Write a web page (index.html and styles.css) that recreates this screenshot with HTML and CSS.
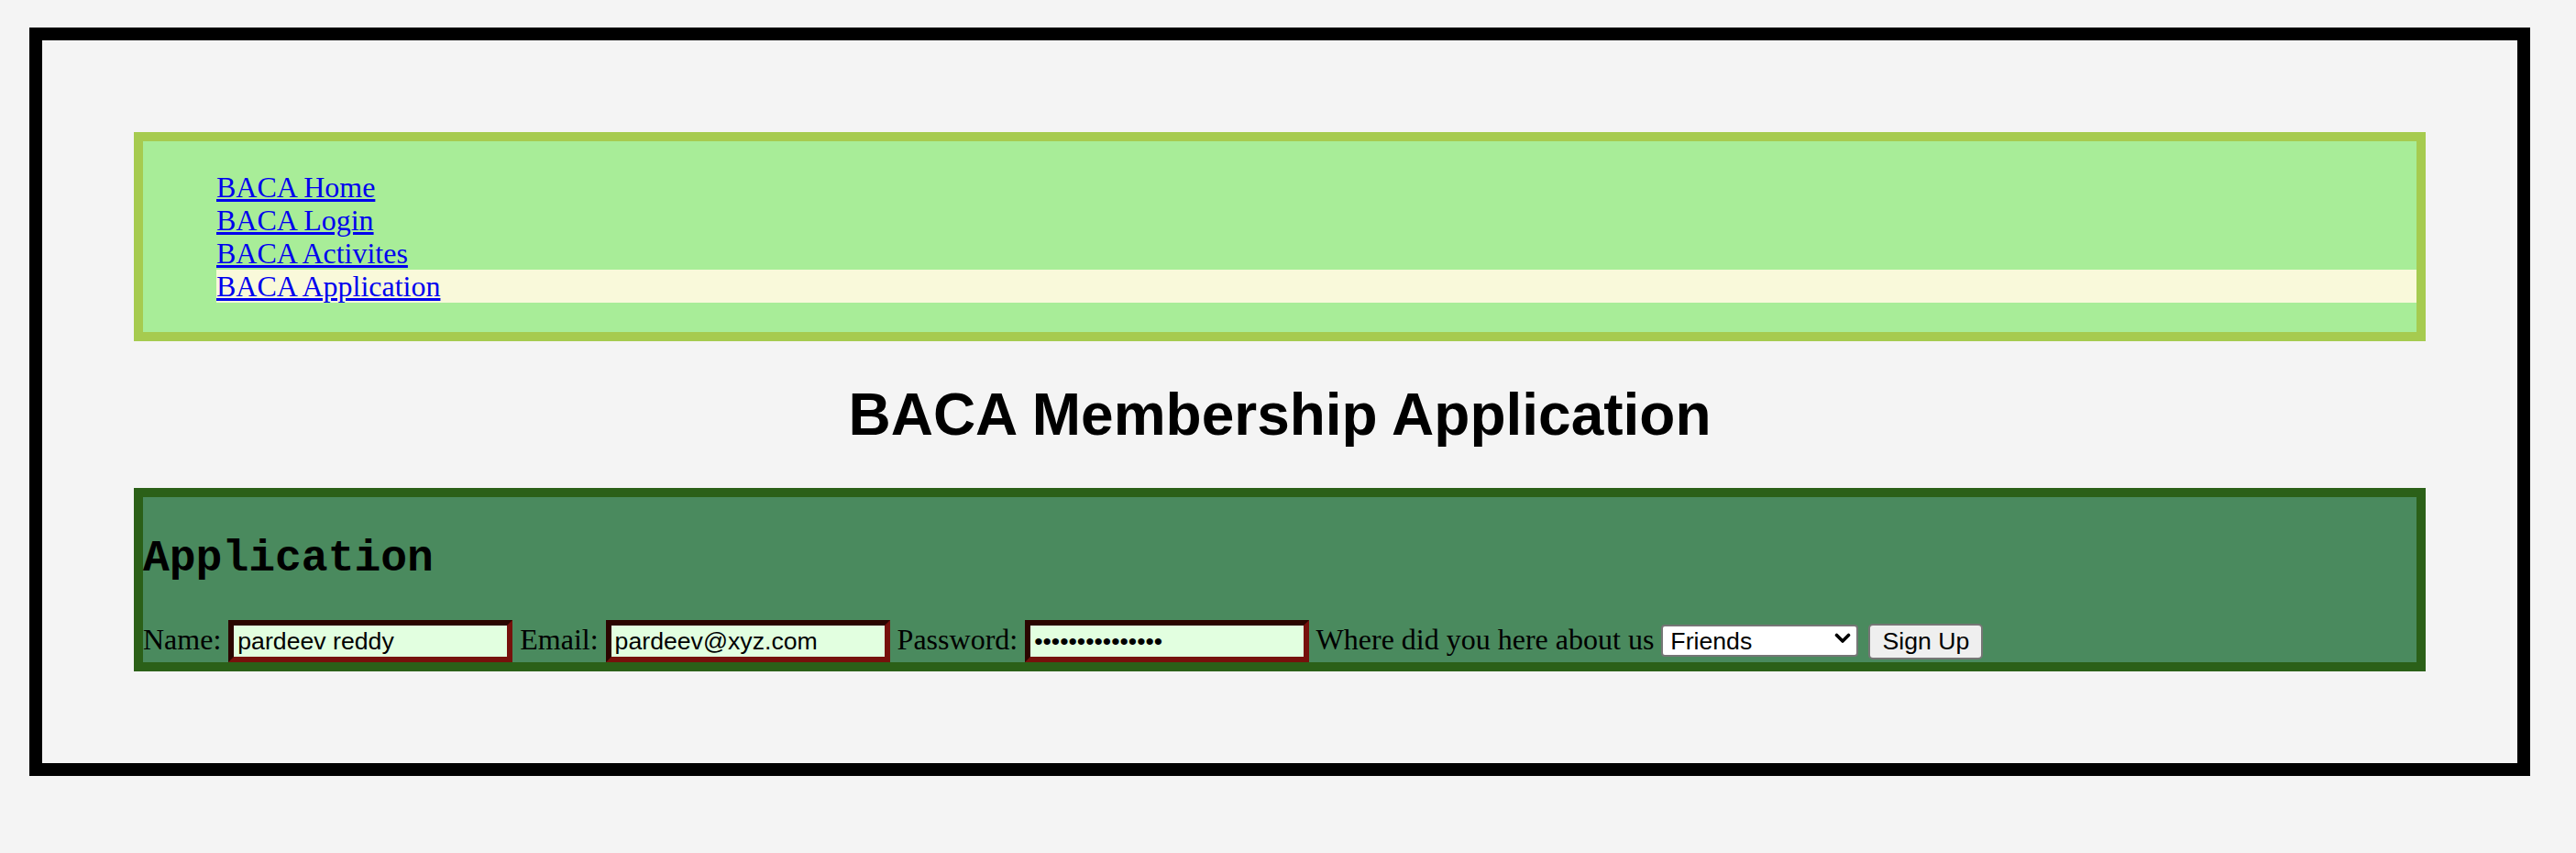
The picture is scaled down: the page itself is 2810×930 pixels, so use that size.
FILE: index.html
```html
<!DOCTYPE html>
<html lang="en">
<head>
<meta charset="utf-8">
<title>BACA Membership Application</title>
<link rel="stylesheet" href="styles.css">
</head>
<body>
<div class="frame">
  <nav class="nav">
    <ul class="nav-list">
      <li class="nav-item"><a href="#">BACA Home</a></li>
      <li class="nav-item"><a href="#">BACA Login</a></li>
      <li class="nav-item"><a href="#">BACA Activites</a></li>
      <li class="nav-item nav-item-active"><a href="#">BACA Application</a></li>
    </ul>
  </nav>
  <h1 class="title">BACA Membership Application</h1>
  <section class="app">
    <h2 class="app-title">Application</h2>
    <form class="app-form">Name: <input class="field" type="text" value="pardeev reddy"> Email: <input class="field" type="text" value="pardeev@xyz.com"> Password: <input class="field" type="password" value="pardeevreddy123"> Where did you here about us <span class="select-wrap"><select class="select"><option>Friends</option><option>Online</option><option>Other</option></select><svg class="chev" width="18" height="12" viewBox="0 0 18 12"><polyline points="2.5,2.5 9,9 15.5,2.5" fill="none" stroke="#000" stroke-width="3.6" stroke-linecap="round" stroke-linejoin="round"/></svg></span> <button class="btn" type="button">Sign Up</button></form>
  </section>
</div>
</body>
</html>
```
FILE: styles.css
```css
html, body {
  background: #f4f4f4;
}
body {
  margin: 0;
  font-family: "Liberation Serif", "Times New Roman", serif;
  font-size: 32px;
  color: #000;
}
.frame {
  margin: 30px 0 0 32px;
  width: 2728px;
  box-sizing: border-box;
  border: 14px solid #000;
  padding: 100px;
  background: #f4f4f4;
}
.nav {
  border: 10px solid #a6cb4f;
  background: #a8ed98;
}
.nav-list {
  list-style: none;
  margin: 32px 0;
  padding: 0 0 0 80px;
}
.nav-item {
  line-height: 36px;
  height: 36px;
}
.nav-item a {
  color: #0000ee;
  text-decoration: underline;
}
.nav-item-active {
  background: #f9f9da;
}
.title {
  font-family: "Liberation Sans", Arial, Helvetica, sans-serif;
  font-weight: bold;
  font-size: 64px;
  text-align: center;
  margin: 43px 0;
  line-height: normal;
}
.app {
  border: 10px solid #2b6018;
  background: #4a8a5e;
}
.app-title {
  font-family: "Liberation Mono", "Courier New", monospace;
  font-weight: bold;
  font-size: 48px;
  margin: 40px 0;
  line-height: normal;
}
.app-form {
  margin: 0;
  font-size: 32px;
  white-space: nowrap;
}
.field {
  box-sizing: border-box;
  width: 310px;
  height: 46px;
  margin: 0;
  padding: 2px 4px;
  border-width: 6px;
  border-style: solid;
  border-color: #2b0500 #76110c #76110c #2b0500;
  background: #e2ffe0;
  font-family: "Liberation Sans", Arial, sans-serif;
  font-size: 26.67px;
  color: #000;
  outline: none;
}
.select-wrap {
  position: relative;
  display: inline-block;
}
.select {
  -webkit-appearance: none;
  appearance: none;
  box-sizing: border-box;
  width: 215px;
  height: 35px;
  margin: 0;
  padding: 0 30px 0 8px;
  border: 2px solid #767676;
  border-radius: 4px;
  background: #fff;
  font-family: "Liberation Sans", Arial, sans-serif;
  font-size: 26.67px;
  color: #000;
}
.chev {
  position: absolute;
  right: 8px;
  top: 11px;
  pointer-events: none;
}
.btn {
  box-sizing: border-box;
  width: 125px;
  height: 39px;
  margin: 0 0 0 3px;
  padding: 0 12px;
  border: 2px solid #767676;
  border-radius: 5px;
  background: #efefef;
  font-family: "Liberation Sans", Arial, sans-serif;
  font-size: 26.67px;
  color: #000;
}
```
